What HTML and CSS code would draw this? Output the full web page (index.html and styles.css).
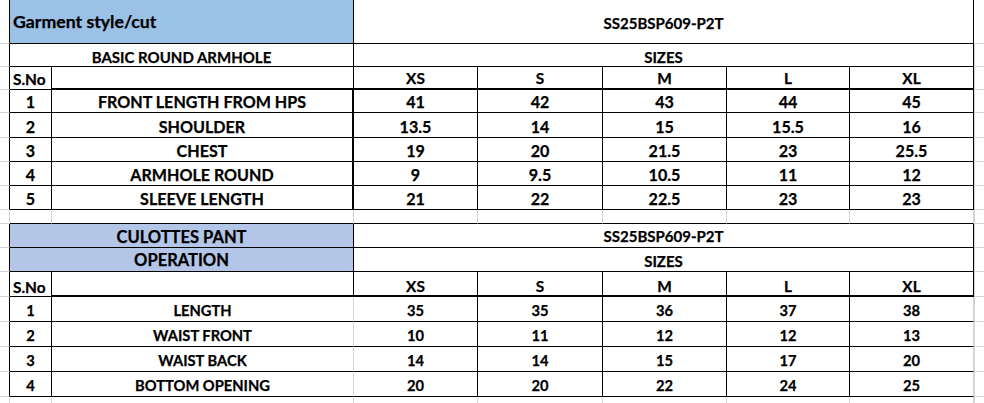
FILE: index.html
```html
<!DOCTYPE html>
<html>
<head>
<meta charset="utf-8">
<link rel="stylesheet" href="styles.css">
</head>
<body>
<div class="sheet">
  <!-- row 1 -->
  <div class="c rb"></div>
  <div class="c span2 rb bb blue1 left mid title">Garment style/cut</div>
  <div class="c span5 rb bb mid hd code">SS25BSP609-P2T</div>
  <div class="c h0"></div>
  <!-- row 2 -->
  <div class="c rb"></div>
  <div class="c span2 rb bb hd tight">BASIC ROUND ARMHOLE</div>
  <div class="c span5 rb bb hd tight">SIZES</div>
  <div class="c h"></div>
  <!-- row 3 -->
  <div class="c rb"></div>
  <div class="c rb bb left sn">S.No</div>
  <div class="c rb bt"></div>
  <div class="c rb bt sn">XS</div>
  <div class="c rb bt sn">S</div>
  <div class="c rb bt sn">M</div>
  <div class="c rb bt sn">L</div>
  <div class="c rb bt sn">XL</div>
  <div class="c h"></div>
  <!-- upper data -->
  <div class="c rb"></div><div class="c rb bb up">1</div><div class="c rt bb up">FRONT LENGTH FROM HPS</div><div class="c rb bb up">41</div><div class="c rb bb up">42</div><div class="c rb bb up">43</div><div class="c rb bb up">44</div><div class="c rb bb up">45</div><div class="c h"></div>
  <div class="c rb"></div><div class="c rb bb up">2</div><div class="c rt bb up">SHOULDER</div><div class="c rb bb up">13.5</div><div class="c rb bb up">14</div><div class="c rb bb up">15</div><div class="c rb bb up">15.5</div><div class="c rb bb up">16</div><div class="c h"></div>
  <div class="c rb"></div><div class="c rb bb up">3</div><div class="c rt bb up">CHEST</div><div class="c rb bb up">19</div><div class="c rb bb up">20</div><div class="c rb bb up">21.5</div><div class="c rb bb up">23</div><div class="c rb bb up">25.5</div><div class="c h"></div>
  <div class="c rb"></div><div class="c rb bb up">4</div><div class="c rt bb up">ARMHOLE ROUND</div><div class="c rb bb up">9</div><div class="c rb bb up">9.5</div><div class="c rb bb up">10.5</div><div class="c rb bb up">11</div><div class="c rb bb up">12</div><div class="c h"></div>
  <div class="c rb"></div><div class="c rb bb up">5</div><div class="c rt bb up">SLEEVE LENGTH</div><div class="c rb bb up">21</div><div class="c rb bb up">22</div><div class="c rb bb up">22.5</div><div class="c rb bb up">23</div><div class="c rb bb up">23</div><div class="c h"></div>
  <!-- blank row -->
  <div class="c"></div><div class="c bb"></div><div class="c bb"></div><div class="c bb"></div><div class="c bb"></div><div class="c bb"></div><div class="c bb"></div><div class="c bb"></div><div class="c h"></div>
  <!-- culottes -->
  <div class="c rb"></div>
  <div class="c span2 rb bb blue2 big">CULOTTES PANT</div>
  <div class="c span5 rb bb hd p1">SS25BSP609-P2T</div>
  <div class="c h"></div>
  <div class="c rb"></div>
  <div class="c span2 rb bb blue2 big p1">OPERATION</div>
  <div class="c span5 rb bb hd">SIZES</div>
  <div class="c h"></div>
  <div class="c rb"></div>
  <div class="c rb bb left sn tight">S.No</div>
  <div class="c rb bt"></div>
  <div class="c rb bt sn tight">XS</div>
  <div class="c rb bt sn tight">S</div>
  <div class="c rb bt sn tight">M</div>
  <div class="c rb bt sn tight">L</div>
  <div class="c rb bt sn tight">XL</div>
  <div class="c h"></div>
  <!-- lower data -->
  <div class="c rb"></div><div class="c rb bb lo">1</div><div class="c bb lo">LENGTH</div><div class="c rb bb lo">35</div><div class="c rb bb lo">35</div><div class="c rb bb lo">36</div><div class="c rb bb lo">37</div><div class="c bb lo">38</div><div class="c h"></div>
  <div class="c rb"></div><div class="c rb bb lo">2</div><div class="c bb lo">WAIST FRONT</div><div class="c rb bb lo">10</div><div class="c rb bb lo">11</div><div class="c rb bb lo">12</div><div class="c rb bb lo">12</div><div class="c bb lo">13</div><div class="c h"></div>
  <div class="c rb"></div><div class="c rb bb lo">3</div><div class="c bb lo">WAIST BACK</div><div class="c rb bb lo">14</div><div class="c rb bb lo">14</div><div class="c rb bb lo">15</div><div class="c rb bb lo">17</div><div class="c bb lo">20</div><div class="c h"></div>
  <div class="c rb"></div><div class="c rb bb lo">4</div><div class="c bb lo">BOTTOM OPENING</div><div class="c rb bb lo">20</div><div class="c rb bb lo">20</div><div class="c rb bb lo">22</div><div class="c rb bb lo">24</div><div class="c bb lo">25</div><div class="c h"></div>
  <!-- final row -->
  <div class="c"></div><div class="c"></div><div class="c"></div><div class="c"></div><div class="c"></div><div class="c"></div><div class="c"></div><div class="c"></div><div class="c h"></div>
</div>
</body>
</html>
```

FILE: styles.css
```css
html, body {
  margin: 0;
  padding: 0;
  background: #ffffff;
  overflow: hidden;
}

.sheet {
  display: grid;
  grid-template-columns: 10px 42px 302px 124px 125px 124px 123px 124px 1fr;
  grid-template-rows: 44px 23px 23px 23px 25px 24px 24px 24px 14px 24px 24px 25px 25px 25px 25px 25px 20px;
  width: 984px;
  font-family: Lato, "Liberation Sans", sans-serif;
  font-weight: 700;
  font-size: 15px;
  line-height: 20px;
  color: #000000;
  -webkit-text-stroke: 0.25px #000000;
}

.c {
  box-sizing: border-box;
  display: flex;
  align-items: flex-end;
  justify-content: center;
  border-right: 1px solid #d4d4d4;
  border-bottom: 1px solid #d4d4d4;
  white-space: nowrap;
  overflow: hidden;
}

.span2 { grid-column: span 2; }
.span5 { grid-column: span 5; }

.rb { border-right: 1px solid #000000; }
.rt { border-right: 2px solid #000000; }
.bb { border-bottom: 1px solid #000000; }
.bt { border-bottom: 2px solid #000000; }

.left {
  justify-content: flex-start;
  padding-left: 3px;
}

.mid { align-items: center; }

.title { font-size: 17.7px; }
.hd { font-size: 15px; }
.code { padding-top: 2px; }
.tight { line-height: 18px; }
.sn { font-size: 15.4px; }
.up { font-size: 16.1px; }
.lo { font-size: 14.7px; padding-bottom: 1px; }
.big { font-size: 16.5px; }

.p1 { padding-bottom: 1px; }

.blue1 { background: #9bc2e6; }
.blue2 { background: #b4c6e7; }

.h {
  border-right: none;
  border-left: 1px solid #d4d4d4;
}

.h0 {
  border-right: none;
}
```
